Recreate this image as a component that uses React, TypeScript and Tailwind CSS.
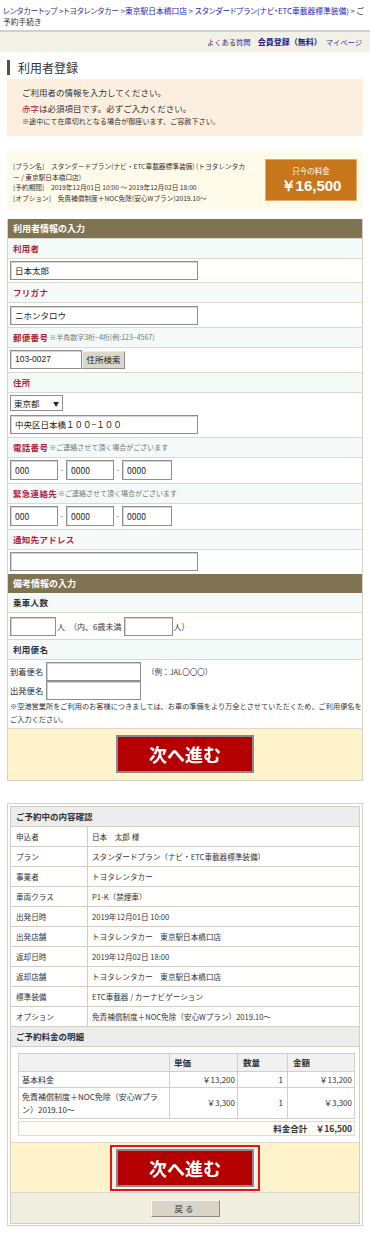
import React from "react";

const jp = "font-['Noto_Sans_CJK_JP','Liberation_Sans',sans-serif]";

const Field = ({ value = "", className = "" }: { value?: string; className?: string }) => (
  <div
    className={`flex items-center border border-[#8e8e8e] bg-white pl-[4px] text-[8.5px] text-[#222] shadow-[inset_1px_1px_0_#d4d4d4] ${className}`}
  >
    {value}
  </div>
);

const Label = ({ children, note }: { children: React.ReactNode; note?: string }) => (
  <div className="flex h-[20px] items-center border-t border-[#dcd8cc] bg-[#f4faf8] pl-[5px]">
    <span className="text-[8.5px] font-bold tracking-[0.3px] text-[#b41f3f]">{children}</span>
    {note && <span className="ml-[1px] text-[7px] text-[#777]">{note}</span>}
  </div>
);

const Phone = () => (
  <div className="flex items-center">
    <Field value="000" className="h-[20px] w-[48px]" />
    <span className="w-[8px] text-center text-[8px] text-[#666]">-</span>
    <Field value="0000" className="h-[20px] w-[48px]" />
    <span className="w-[8px] text-center text-[8px] text-[#666]">-</span>
    <Field value="0000" className="h-[20px] w-[50px]" />
  </div>
);

const NextButton = () => (
  <div className="flex h-[38px] w-[138px] items-center justify-center border-2 border-[#8a8a8a] bg-[#b40000] text-[18px] font-bold text-white">
    次へ進む
  </div>
);

const confirmRows: [string, string][] = [
  ["申込者", "日本　太郎 様"],
  ["プラン", "スタンダードプラン（ナビ・ETC車載器標準装備）"],
  ["事業者", "トヨタレンタカー"],
  ["車両クラス", "P1-K（禁煙車）"],
  ["出発日時", "2019年12月01日 10:00"],
  ["出発店舗", "トヨタレンタカー　東京駅日本橋口店"],
  ["返却日時", "2019年12月02日 18:00"],
  ["返却店舗", "トヨタレンタカー　東京駅日本橋口店"],
  ["標準装備", "ETC車載器 / カーナビゲーション"],
  ["オプション", "免責補償制度＋NOC免除（安心Wプラン）2019.10〜"],
];

export default function App() {
  return (
    <div className={`w-[370px] bg-white pb-[18px] text-[#333] ${jp}`}>
      {/* breadcrumb */}
      <div className="h-[32px] border-b-2 border-[#d0d0d0] px-[3px] pt-[5px] text-[7.75px] leading-[11px] [font-feature-settings:'palt']">
        <div className="whitespace-nowrap">
          <span className="text-[#4a2c8c]">レンタカートップ</span> &gt;
          <span className="text-[#4a2c8c]">トヨタレンタカー</span> &gt;
          <span className="text-[#1c1cb4]">東京駅日本橋口店</span> &gt;{" "}
          <span className="text-[#1c1cb4]">スタンダードプラン(ナビ・ETC車載器標準装備)</span> &gt; ご
        </div>
        <div>予約手続き</div>
      </div>

      {/* top links */}
      <div className="flex h-[20px] items-center justify-end bg-[#f3f1e5] pr-[8px]">
        <span className="text-[7.3px] text-[#3b2a7e]">よくある質問</span>
        <span className="ml-[7px] text-[8px] font-bold text-[#1a1a8a]">会員登録（無料）</span>
        <span className="ml-[4px] text-[7.3px] text-[#2a3aa0]">マイページ</span>
      </div>

      {/* title */}
      <div className="mt-[8px] flex h-[15px] items-center pl-[7px]">
        <div className="h-[15px] w-[3px] bg-[#5b5142]" />
        <h1 className="ml-[8px] text-[12px] leading-none text-[#333]">利用者登録</h1>
      </div>

      {/* notice */}
      <div className="mx-[7px] mt-[4px] h-[57px] bg-[#fcefdf] pl-[15px] pt-[6px]">
        <p className="text-[8.5px] leading-[15.5px]">ご利用者の情報を入力してください。</p>
        <p className="text-[8.5px] leading-[15.5px]">
          <span className="text-[#b41f3f]">赤字</span>は必須項目です。必ずご入力ください。
        </p>
        <p className="text-[7.1px] leading-[10px]">※途中にて在庫切れとなる場合が御座います、ご容赦下さい。</p>
      </div>

      {/* plan */}
      <div className="mx-[7px] mt-[15px] flex h-[58px] bg-[#fffbea]">
        <div className="pl-[6px] pt-[10px] text-[6.7px] leading-[10.6px] whitespace-nowrap">
          <div>[プラン名]　スタンダードプラン(ナビ・ETC車載器標準装備) (トヨタレンタカ</div>
          <div>ー / 東京駅日本橋口店)</div>
          <div>[予約期間]　2019年12月01日 10:00 〜 2019年12月02日 18:00</div>
          <div>[オプション]　免責補償制度＋NOC免除(安心Wプラン)2019.10〜</div>
        </div>
        <div className="ml-auto mr-[6px] mt-[8px] flex h-[42px] w-[92px] flex-col items-center justify-center border border-[#e6ab6a] bg-[#c8761c] text-white">
          <span className="text-[7.5px] leading-[12px]">只今の料金</span>
          <span className="font-['Liberation_Sans',sans-serif] text-[15px] font-bold leading-[18px]">￥16,500</span>
        </div>
      </div>

      {/* form */}
      <div className="mx-[7px] mt-[10px] border border-t-0 border-[#d6d2c4]">
        <div className="flex h-[19px] items-center bg-[#807352] pl-[5px] text-[9px] font-bold text-white">利用者情報の入力</div>

        <Label>利用者</Label>
        <div className="border-t border-[#dcd8cc] pb-[2px] pl-[2px] pt-[2px]">
          <Field value="日本太郎" className="h-[19px] w-[188px]" />
        </div>

        <Label>フリガナ</Label>
        <div className="border-t border-[#dcd8cc] pb-[2px] pl-[2px] pt-[3px]">
          <Field value="ニホンタロウ" className="h-[19px] w-[188px]" />
        </div>

        <Label note="※半角数字3桁−4桁(例:123−4567)">郵便番号</Label>
        <div className="flex items-center border-t border-[#dcd8cc] pb-[3px] pl-[2px] pt-[2px]">
          <Field value="103-0027" className="h-[19px] w-[72px] font-['Liberation_Sans',sans-serif]" />
          <div className="flex h-[18px] w-[43px] items-center justify-center border border-[#8a8a8a] border-l-[#eee] border-t-[#eee] bg-[#dcd8cc] text-[8.5px] text-[#222]">
            住所検索
          </div>
        </div>

        <Label>住所</Label>
        <div className="border-t border-[#dcd8cc] pb-[3px] pl-[2px] pt-[2px]">
          <div className="flex h-[16px] w-[53px] items-center justify-between border border-[#8e8e8e] bg-white px-[3px] text-[8.5px] text-[#222]">
            <span>東京都</span>
            <span className="text-[6px]">▼</span>
          </div>
          <Field value="中央区日本橋１００−１００" className="mt-[4px] h-[19px] w-[188px]" />
        </div>

        <Label note="※ご連絡させて頂く場合がございます">電話番号</Label>
        <div className="border-t border-[#dcd8cc] pb-[3px] pl-[2px] pt-[2px]">
          <Phone />
        </div>

        <Label note="※ご連絡させて頂く場合がございます">緊急連絡先</Label>
        <div className="border-t border-[#dcd8cc] pb-[3px] pl-[2px] pt-[2px]">
          <Phone />
        </div>

        <Label>通知先アドレス</Label>
        <div className="border-t border-[#dcd8cc] pb-[3px] pl-[2px] pt-[2px]">
          <Field className="h-[19px] w-[188px]" />
        </div>

        <div className="flex h-[19px] items-center bg-[#807352] pl-[5px] text-[9px] font-bold text-white">備考情報の入力</div>

        <div className="flex h-[19px] items-center bg-[#f4faf8] pl-[5px] text-[8.5px] font-bold tracking-[0.3px] text-[#333]">乗車人数</div>
        <div className="flex items-center border-t border-[#dcd8cc] pb-[3px] pl-[2px] pt-[4px] text-[8px]">
          <Field className="h-[19px] w-[46px]" />
          <span className="ml-[1px]">人　（内、6歳未満</span>
          <Field className="ml-[3px] h-[19px] w-[49px]" />
          <span>人）</span>
        </div>

        <div className="flex h-[20px] items-center border-t border-[#dcd8cc] bg-[#f4faf8] pl-[5px] text-[8.5px] font-bold tracking-[0.3px] text-[#333]">利用便名</div>
        <div className="border-t border-[#dcd8cc] pb-[2px] pl-[2px] pt-[2px] text-[8.3px]">
          <div className="flex items-center">
            <span className="w-[36px]">到着便名</span>
            <Field className="h-[19px] w-[95px]" />
            <span className="ml-[6px] text-[7.5px]">（例：JAL〇〇〇）</span>
          </div>
          <div className="flex items-center">
            <span className="w-[36px]">出発便名</span>
            <Field className="h-[19px] w-[95px]" />
          </div>
          <p className="text-[7.2px] leading-[13px]">
            ※空港営業所をご利用のお客様につきましては、お車の準備をより万全とさせていただくため、ご利用便名をご入力ください。
          </p>
        </div>

        <div className="flex justify-center border-t border-[#dcd8cc] bg-[#fff3cc] pb-[7px] pt-[6px]">
          <NextButton />
        </div>
      </div>

      {/* confirmation */}
      <div className="mx-[7px] mt-[22px] border border-[#d6d2c4] px-[2px] pb-[1px] pt-[2px]">
        <div className="border border-[#d2cec2]">
          <div className="flex h-[19px] items-center bg-[#ececec] pl-[5px] text-[8.5px] font-bold">ご予約中の内容確認</div>
          {confirmRows.map(([k, v]) => (
            <div key={k} className="flex h-[20px] border-t border-[#d2cec2] text-[7.6px]">
              <div className="flex w-[77px] items-center border-r border-[#d2cec2] pl-[5px]">{k}</div>
              <div className="flex items-center pl-[4px]">{v}</div>
            </div>
          ))}
          <div className="flex h-[20px] items-center border-t border-[#d2cec2] bg-[#ececec] pl-[5px] text-[8.5px] font-bold">ご予約料金の明細</div>

          <div className="border-t border-[#d2cec2] pb-[6px] pl-[7px] pr-[4px] pt-[6px] text-[8px]">
            <div className="border border-[#cfcfcf]">
              <div className="flex h-[17px] bg-[#f1f1f1] text-[8.5px] font-bold">
                <div className="w-[151px] border-r border-[#cfcfcf]" />
                <div className="flex w-[68px] items-center border-r border-[#cfcfcf] pl-[4px]">単価</div>
                <div className="flex w-[50px] items-center border-r border-[#cfcfcf] pl-[5px]">数量</div>
                <div className="flex flex-1 items-center pl-[5px]">金額</div>
              </div>
              <div className="flex h-[16px] border-t border-[#cfcfcf]">
                <div className="flex w-[151px] items-center border-r border-[#cfcfcf] pl-[3px]">基本料金</div>
                <div className="flex w-[68px] items-center justify-end border-r border-[#cfcfcf] pr-[2px]">￥13,200</div>
                <div className="flex w-[50px] items-center justify-end border-r border-[#cfcfcf] pr-[4px]">1</div>
                <div className="flex flex-1 items-center justify-end pr-[2px]">￥13,200</div>
              </div>
              <div className="flex h-[31px] border-t border-[#cfcfcf]">
                <div className="flex w-[151px] flex-col justify-center border-r border-[#cfcfcf] pl-[3px] leading-[13px]">
                  <span>免責補償制度＋NOC免除（安心Wプラ</span>
                  <span>ン）2019.10〜</span>
                </div>
                <div className="flex w-[68px] items-center justify-end border-r border-[#cfcfcf] pr-[2px]">￥3,300</div>
                <div className="flex w-[50px] items-center justify-end border-r border-[#cfcfcf] pr-[4px]">1</div>
                <div className="flex flex-1 items-center justify-end pr-[2px]">￥3,300</div>
              </div>
            </div>
            <div className="mt-[2px] flex h-[15px] items-center justify-end border border-[#dcdcdc] bg-[#fdfcf4] pr-[2px] text-[8.5px] font-bold">
              料金合計　￥16,500
            </div>
          </div>

          <div className="flex justify-center border-t border-[#dcd8cc] bg-[#fff3cc] pb-[1px] pt-[2px]">
            <div className="border-2 border-[#e4151b] bg-[#fbf1e6] px-[4px] py-[2px]">
              <NextButton />
            </div>
          </div>

          <div className="flex h-[31px] justify-center border-t border-[#dcd8cc] bg-[#efeedf] pt-[7px]">
            <div className="flex h-[17px] w-[69px] items-center justify-center border border-[#8a8a8a] border-l-[#f4f4f4] border-t-[#f4f4f4] bg-[#d8d4c8] text-[8.5px] tracking-[2px]">
              戻る
            </div>
          </div>
        </div>
      </div>
    </div>
  );
}
